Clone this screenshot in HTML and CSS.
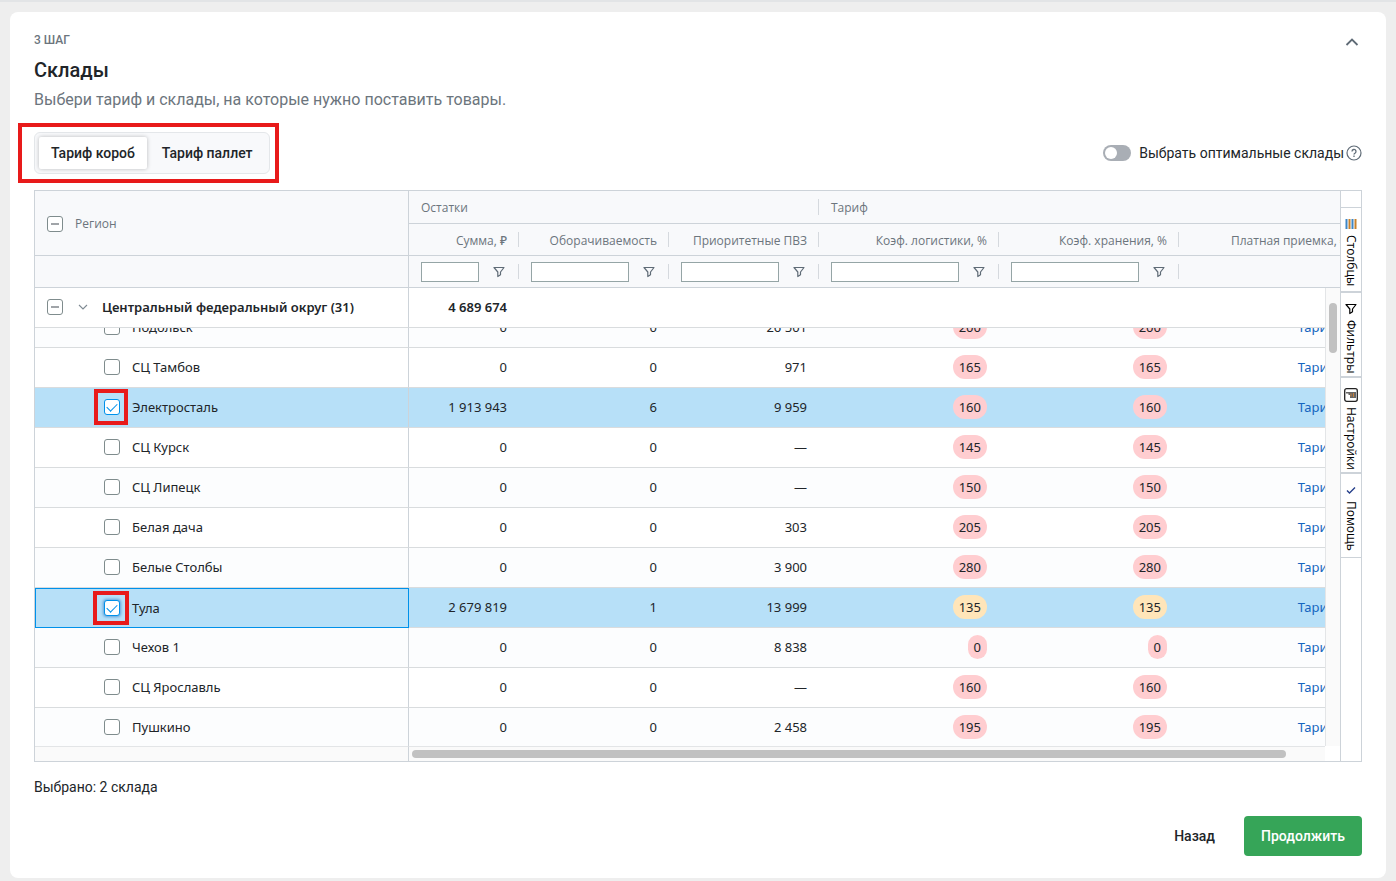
FILE: index.html
```html
<!DOCTYPE html>
<html lang="ru">
<head>
    <meta charset="utf-8">
    <title>Склады</title>
    <meta name="viewport" content="width=device-width, initial-scale=1">
    <link rel="stylesheet" href="styles.css">
</head>
<body>
    <svg class="sprite" aria-hidden="true">
        <symbol id="funnel" viewBox="0 0 12 12">
            <path d="M1 1.500h10L7.500 6v2.800L4.800 10.500V6z" fill="none" stroke="currentColor" stroke-width="1.2" stroke-linejoin="round"/>
        </symbol>
    </svg>

    <main class="card">
        <header class="card-header">
            <div>
                <p class="step">3 ШАГ</p>
                <h1>Склады</h1>
                <p class="subtitle">Выбери тариф и склады, на которые нужно поставить товары.</p>
            </div>
            <button class="collapse" aria-label="Свернуть">
                <svg width="20" height="20" viewBox="0 0 20 20"><path d="M4.500 13 10 7.500l5.500 5.500" fill="none" stroke="#5f6b76" stroke-width="1.8"/></svg>
            </button>
        </header>

        <div class="toolbar">
            <div class="segmented">
                <button class="segment active">Тариф короб</button>
                <button class="segment">Тариф паллет</button>
            </div>
            <div class="optimal">
                <input type="checkbox" class="switch" id="optimal">
                <label for="optimal">Выбрать оптимальные склады</label>
                <svg width="16" height="16" viewBox="0 0 16 16" fill="none" stroke="#5f6b76">
                    <circle cx="8" cy="8" r="7" stroke-width="1.2"/>
                    <path d="M6 6.500a2 2 0 1 1 3 1.700c-.7.4-1 .7-1 1.300" stroke-width="1.3"/>
                    <path d="M8 10.600v1.300" stroke-width="1.3"/>
                </svg>
            </div>
        </div>

        <div class="grid">
            <div class="grid-main">
                <div class="viewport" id="viewport">
                    <table>
                        <colgroup>
                            <col class="c-region">
                            <col class="c-sum">
                            <col class="c-mid">
                            <col class="c-mid">
                            <col class="c-wide">
                            <col class="c-wide">
                            <col class="c-wide">
                        </colgroup>
                        <thead>
                            <tr>
                                <th rowspan="2" class="region">
                                    <label class="head-label"><input type="checkbox" class="check partial"> Регион</label>
                                </th>
                                <th colspan="3" class="group tick">Остатки</th>
                                <th colspan="3" class="group">Тариф</th>
                            </tr>
                            <tr>
                                <th class="tick">Сумма, ₽</th>
                                <th class="tick">Оборачиваемость</th>
                                <th class="tick">Приоритетные ПВЗ</th>
                                <th class="tick">Коэф. логистики, %</th>
                                <th class="tick">Коэф. хранения, %</th>
                                <th>Платная приемка, ₽</th>
                            </tr>
                            <tr class="filters">
                                <th class="region"></th>
                                <th class="tick"><div class="filter"><input type="text" aria-label="Фильтр: сумма"><button aria-label="Фильтр"><svg><use href="#funnel"/></svg></button></div></th>
                                <th class="tick"><div class="filter"><input type="text" aria-label="Фильтр: оборачиваемость"><button aria-label="Фильтр"><svg><use href="#funnel"/></svg></button></div></th>
                                <th class="tick"><div class="filter"><input type="text" aria-label="Фильтр: приоритетные ПВЗ"><button aria-label="Фильтр"><svg><use href="#funnel"/></svg></button></div></th>
                                <th class="tick"><div class="filter"><input type="text" aria-label="Фильтр: логистика"><button aria-label="Фильтр"><svg><use href="#funnel"/></svg></button></div></th>
                                <th class="tick"><div class="filter"><input type="text" aria-label="Фильтр: хранение"><button aria-label="Фильтр"><svg><use href="#funnel"/></svg></button></div></th>
                                <th></th>
                            </tr>
                            <tr class="district">
                                <td class="region">
                                    <div class="district-name">
                                        <input type="checkbox" class="check partial" id="cfo">
                                        <svg width="10" height="6" viewBox="0 0 10 6"><path d="M1 1l4 4 4-4" fill="none" stroke="#7f8a93" stroke-width="1.1"/></svg>
                                        <label for="cfo">Центральный федеральный округ <span>(31)</span></label>
                                    </div>
                                </td>
                                <td>4 689 674</td>
                                <td></td>
                                <td></td>
                                <td></td>
                                <td></td>
                                <td></td>
                            </tr>
                        </thead>
                        <tbody>
                            <tr>
                                <td class="region"><label class="name"><input type="checkbox" class="check"> Подольск</label></td>
                                <td>0</td><td>0</td><td>26 501</td>
                                <td><span class="pill">200</span></td><td><span class="pill">200</span></td>
                                <td><a href="#">Тарифы</a></td>
                            </tr>
                            <tr>
                                <td class="region"><label class="name"><input type="checkbox" class="check"> СЦ Тамбов</label></td>
                                <td>0</td><td>0</td><td>971</td>
                                <td><span class="pill">165</span></td><td><span class="pill">165</span></td>
                                <td><a href="#">Тарифы</a></td>
                            </tr>
                            <tr class="selected">
                                <td class="region"><label class="name marked"><input type="checkbox" class="check" checked> Электросталь</label></td>
                                <td>1 913 943</td><td>6</td><td>9 959</td>
                                <td><span class="pill">160</span></td><td><span class="pill">160</span></td>
                                <td><a href="#">Тарифы</a></td>
                            </tr>
                            <tr>
                                <td class="region"><label class="name"><input type="checkbox" class="check"> СЦ Курск</label></td>
                                <td>0</td><td>0</td><td>—</td>
                                <td><span class="pill">145</span></td><td><span class="pill">145</span></td>
                                <td><a href="#">Тарифы</a></td>
                            </tr>
                            <tr>
                                <td class="region"><label class="name"><input type="checkbox" class="check"> СЦ Липецк</label></td>
                                <td>0</td><td>0</td><td>—</td>
                                <td><span class="pill">150</span></td><td><span class="pill">150</span></td>
                                <td><a href="#">Тарифы</a></td>
                            </tr>
                            <tr>
                                <td class="region"><label class="name"><input type="checkbox" class="check"> Белая дача</label></td>
                                <td>0</td><td>0</td><td>303</td>
                                <td><span class="pill">205</span></td><td><span class="pill">205</span></td>
                                <td><a href="#">Тарифы</a></td>
                            </tr>
                            <tr>
                                <td class="region"><label class="name"><input type="checkbox" class="check"> Белые Столбы</label></td>
                                <td>0</td><td>0</td><td>3 900</td>
                                <td><span class="pill">280</span></td><td><span class="pill">280</span></td>
                                <td><a href="#">Тарифы</a></td>
                            </tr>
                            <tr class="selected">
                                <td class="region focused"><label class="name marked"><input type="checkbox" class="check" checked> Тула</label></td>
                                <td>2 679 819</td><td>1</td><td>13 999</td>
                                <td><span class="pill warn">135</span></td><td><span class="pill warn">135</span></td>
                                <td><a href="#">Тарифы</a></td>
                            </tr>
                            <tr>
                                <td class="region"><label class="name"><input type="checkbox" class="check"> Чехов 1</label></td>
                                <td>0</td><td>0</td><td>8 838</td>
                                <td><span class="pill">0</span></td><td><span class="pill">0</span></td>
                                <td><a href="#">Тарифы</a></td>
                            </tr>
                            <tr>
                                <td class="region"><label class="name"><input type="checkbox" class="check"> СЦ Ярославль</label></td>
                                <td>0</td><td>0</td><td>—</td>
                                <td><span class="pill">160</span></td><td><span class="pill">160</span></td>
                                <td><a href="#">Тарифы</a></td>
                            </tr>
                            <tr>
                                <td class="region"><label class="name"><input type="checkbox" class="check"> Пушкино</label></td>
                                <td>0</td><td>0</td><td>2 458</td>
                                <td><span class="pill">195</span></td><td><span class="pill">195</span></td>
                                <td><a href="#">Тарифы</a></td>
                            </tr>
                        </tbody>
                    </table>
                </div>
                <div class="v-scroll"><div class="v-thumb"></div></div>
                <div class="h-scroll">
                    <div class="h-pinned"></div>
                    <div class="h-track"><div class="h-thumb"></div></div>
                </div>
            </div>

            <div class="side-bar">
                <button class="side-tab">
                    <svg width="12" height="12" viewBox="0 0 12 12" stroke-width="2"><path d="M1.500 1v10M7.500 1v10" stroke="#3d86c6"/><path d="M4.500 1v10M10.500 1v10" stroke="#c8812c"/></svg>
                    Столбцы
                </button>
                <button class="side-tab">
                    <svg width="12" height="12"><use href="#funnel"/></svg>
                    Фильтры
                </button>
                <button class="side-tab tall">
                    <svg width="14" height="14" viewBox="0 0 14 14"><rect x=".7" y=".7" width="12.600" height="12.600" rx="2" fill="#fff" stroke="#222" stroke-width="1.3"/><path d="M2 4h10v6H6V7H4.500V5.500H2z" fill="#666"/><path d="M7 5.500v3M9.500 5v4" stroke="#c9813a"/></svg>
                    Настройки
                </button>
                <button class="side-tab">
                    <svg width="12" height="12" viewBox="0 0 12 12"><path d="M2 6.500 4.500 9 10 3.500" fill="none" stroke="#27408b" stroke-width="1.4"/></svg>
                    Помощь
                </button>
            </div>
        </div>

        <p class="total">Выбрано: 2 склада</p>

        <footer class="actions">
            <button class="btn">Назад</button>
            <button class="btn primary">Продолжить</button>
        </footer>
    </main>

    <script>
        // список слегка прокручен под закреплённый округ
        document.getElementById('viewport').scrollTop = 20;
    </script>
</body>
</html>
```
FILE: styles.css
```css
*, *::before, *::after {
    box-sizing: border-box;
}

body {
    margin: 0;
    padding: 10px 10px 3px;
    border-top: 2px solid #e2e4e6;
    background: #eee;
    color: #212529;
    font-family: Roboto, sans-serif;
    font-size: 14px;
    line-height: 20px;
}

h1, p {
    margin: 0;
}

button, input {
    margin: 0;
    font: inherit;
    color: inherit;
}

button {
    padding: 0;
    border: none;
    background: none;
    cursor: pointer;
}

.sprite {
    display: none;
}

.card {
    padding: 18px 24px 22px;
    border-radius: 8px;
    background: #fff;
}

.card-header, .toolbar {
    display: flex;
    justify-content: space-between;
    align-items: flex-start;
}

.step {
    font-size: 12px;
    font-weight: 500;
    color: #6c757d;
}

h1 {
    margin-top: 8px;
    font-size: 20px;
    line-height: 24px;
    font-weight: 500;
}

.subtitle {
    margin-top: 6px;
    font-size: 16px;
    line-height: 24px;
    color: #6c757d;
}

.collapse {
    display: flex;
    margin-top: 2px;
}

.toolbar {
    align-items: center;
    margin-top: 20px;
}

.segmented {
    position: relative;
    display: flex;
    gap: 3px;
    padding: 4px;
    border: 1px solid #e4e7ea;
    border-radius: 6px;
    background: #f8f9fb;
}

/* красная рамка вокруг переключателя */
.segmented::after {
    content: "";
    position: absolute;
    inset: -10px -10px -10px -17px;
    border: 4px solid #e81a1a;
    pointer-events: none;
}

.segment {
    height: 32px;
    padding: 0 12px;
    border-radius: 2px;
    font-weight: 500;
}

.segment.active {
    background: #fff;
    box-shadow: 0 0 4px rgba(0, 0, 0, 0.25);
}

.optimal {
    display: flex;
    align-items: center;
}

.optimal label {
    margin: 0 2px 0 8px;
}

.switch {
    appearance: none;
    width: 28px;
    height: 16px;
    padding: 2px;
    border-radius: 8px;
    background: #a9aeb5;
}

.switch::before {
    content: "";
    display: block;
    width: 12px;
    height: 12px;
    border-radius: 50%;
    background: #fff;
}

.grid {
    display: flex;
    margin-top: 16px;
    border: 1px solid #cdd3d9;
    font-family: "Noto Sans", sans-serif;
}

.grid-main {
    position: relative;
    flex: 1;
    min-width: 0;
    border-right: 1px solid #cdd3d9;
}

.viewport {
    height: 555px;
    overflow: hidden;
}

table {
    width: 100%;
    min-width: 1324px;
    table-layout: fixed;
    border-collapse: separate;
    border-spacing: 0;
}

.c-region {
    width: 374px;
}

.c-sum {
    width: 110px;
}

.c-mid {
    width: 150px;
}

.c-wide {
    width: 180px;
}

thead {
    position: sticky;
    top: 0;
    z-index: 2;
}

th {
    position: relative;
    height: 32px;
    padding: 2px 12px 0;
    border-bottom: 1px solid #cdd3d9;
    background: #f8f9fb;
    font-family: "Open Sans", "Noto Sans", sans-serif;
    font-size: 12px;
    line-height: 16px;
    font-weight: 500;
    color: #6c757d;
    text-align: right;
    white-space: nowrap;
}

thead tr:first-child th {
    height: 33px;
}

.filters th {
    padding-top: 0;
}

th.group {
    text-align: left;
}

.tick::after {
    content: "";
    position: absolute;
    right: 0;
    top: 8px;
    bottom: 8px;
    border-right: 1px solid #d5d9de;
}

td.region, th.region {
    border-right: 1px solid #cdd3d9;
    text-align: left;
}

.head-label {
    display: flex;
    align-items: center;
    gap: 12px;
}

.check {
    position: relative;
    flex: none;
    appearance: none;
    width: 16px;
    height: 16px;
    border: 1px solid #7f8c8d;
    border-radius: 3px;
    background: #fff;
}

.check.partial::before {
    content: "";
    position: absolute;
    left: 3px;
    right: 3px;
    top: 6px;
    height: 2px;
    background: #a0a4a8;
}

.check:checked {
    border-color: #0091ea;
}

.check:checked::before {
    content: "";
    position: absolute;
    left: 2px;
    top: 3px;
    width: 10px;
    height: 6px;
    border-left: 1px solid #0091ea;
    border-bottom: 1px solid #0091ea;
    transform: rotate(-45deg);
}

.filter {
    display: flex;
    align-items: center;
    gap: 14px;
}

.filter input {
    flex: 1;
    min-width: 0;
    height: 20px;
    padding: 0 4px;
    border: 1px solid #95a5a6;
    background: #fff;
}

.filter button {
    margin-right: 2px;
    display: flex;
    color: #5f6b76;
}

.filter svg {
    width: 12px;
    height: 12px;
}

td {
    height: 40px;
    padding: 0 12px 1px;
    border-bottom: 1px solid #d9dcde;
    background: #fff;
    font-size: 13px;
    line-height: 20px;
    text-align: right;
    white-space: nowrap;
}

tbody tr:nth-child(odd) td {
    background: #fcfdfe;
}

tbody tr.selected td {
    background: #b7e0f8;
}

tbody td.focused {
    padding: 0 11px;
    border: 1px solid #0091ea;
}

.district td {
    font-weight: 600;
}

.district-name {
    display: flex;
    align-items: center;
}

.district-name svg {
    margin: 0 14px 0 15px;
}

.name {
    position: relative;
    display: flex;
    align-items: center;
    gap: 12px;
    padding-left: 57px;
}

/* красная рамка вокруг отмеченного склада */
.marked::after {
    content: "";
    position: absolute;
    left: 47px;
    top: -8px;
    width: 34px;
    height: 36px;
    border: 4px solid #e81a1a;
    pointer-events: none;
}

.focused .marked::after {
    left: 46px;
    top: -7px;
    width: 36px;
    height: 34px;
}

.focused .check {
    box-shadow: 0 0 3px 1px #5b9fd8;
}

.pill {
    display: inline-block;
    padding: 2px 6px;
    border-radius: 12px;
    background: #ffcdd0;
}

.pill.warn {
    background: #ffe5b9;
}

td a {
    color: #1565c0;
    text-decoration: none;
}

/* полосы прокрутки */
.v-scroll {
    position: absolute;
    top: 97px;
    right: 0;
    bottom: 15px;
    z-index: 3;
    width: 15px;
    padding: 15px 3px;
    border-left: 1px solid #e3e5e7;
    background: #fafafa;
}

.v-thumb {
    height: 50px;
    border-radius: 4px;
    background: #c1c1c1;
}

.h-scroll {
    display: flex;
    height: 15px;
    padding-right: 15px;
}

.h-pinned {
    width: 374px;
    border-top: 1px solid #e3e5e7;
    border-right: 1px solid #cdd3d9;
    background: #fafafa;
}

.h-track {
    flex: 1;
    padding: 3px;
    border-top: 1px solid #e3e5e7;
    background: #fafafa;
}

.h-thumb {
    width: 96%;
    height: 8px;
    border-radius: 4px;
    background: #c1c1c1;
}

.side-bar {
    display: flex;
    flex-direction: column;
    width: 20px;
    padding-top: 16px;
}

.side-tab {
    display: flex;
    align-items: center;
    gap: 5px;
    height: 85px;
    padding-top: 10px;
    border-top: 1px solid #cdd3d9;
    border-bottom: 1px solid #cdd3d9;
    writing-mode: vertical-rl;
    color: #000;
    font-family: "Open Sans", "Noto Sans", sans-serif;
    font-size: 12px;
    line-height: 20px;
}

.side-tab.tall {
    height: 96px;
}

.side-tab svg {
    flex: none;
}

.total {
    margin-top: 15px;
}

.actions {
    display: flex;
    justify-content: flex-end;
    gap: 13px;
    margin-top: 19px;
}

.btn {
    height: 40px;
    padding: 0 16px;
    border-radius: 4px;
    font-weight: 500;
}

.btn.primary {
    min-width: 118px;
    background: #36a558;
    color: #fff;
}
```
